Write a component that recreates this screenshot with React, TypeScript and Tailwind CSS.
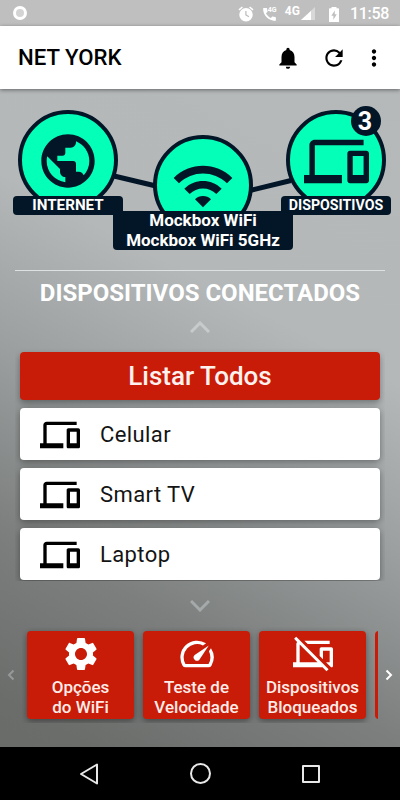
import type { ReactNode } from "react";
import {
  MdCall,
  MdDevices,
  MdMoreVert,
  MdNotifications,
  MdPhonelinkOff,
  MdPublic,
  MdRefresh,
  MdSettings,
  MdSpeed,
  MdWifi,
} from "react-icons/md";

function AlarmIcon({ className }: { className: string }) {
  return (
    <svg className={className} viewBox="0 0 24 24" fill="currentColor" fillRule="evenodd">
      <path d="M22 5.720l-4.600-3.860-1.290 1.530 4.600 3.860L22 5.720zM7.880 3.390L6.600 1.860 2 5.710l1.290 1.530 4.590-3.850zM12 4a9 9 0 1 0 0 18 9 9 0 0 0 0-18zM11 8h1.700v4.800l3.700 2.200-.9 1.400L11 13.700z" />
    </svg>
  );
}

function BatteryIcon({ className }: { className: string }) {
  return (
    <svg className={className} viewBox="0 0 10 15" fill="currentColor" fillRule="evenodd">
      <path d="M2.500 0h5v1.300h1.900c.4 0 .6.2.6.6v12.500c0 .4-.2.600-.6.600H.6c-.4 0-.6-.2-.6-.6V1.900c0-.4.2-.6.6-.6h1.900zM5.800 3.500L2.300 8.700h2.100v4l3.400-5.400H5.800z" />
    </svg>
  );
}

function StatusBar() {
  return (
    <div className="flex h-[26px] shrink-0 items-center bg-[#bfbfbf] pt-[2px] pr-[11px] pl-[13px] text-white">
      <div className="-mt-[2px] size-[14px] rounded-full border-[3px] border-white bg-[#d4d4d4]" />
      <AlarmIcon className="ml-auto size-[18px]" />
      <div className="relative ml-[6px] h-[16px] w-[18px]">
        <MdCall className="size-[17px]" />
        <span className="absolute top-0 left-[7px] text-[7px] leading-[8px] font-bold">4G</span>
      </div>
      <span className="-mt-[6px] ml-[6px] text-[12px] leading-[14px] font-bold">4G</span>
      <svg className="ml-[1px] h-[14px] w-[14px]" viewBox="0 0 14 14" fill="currentColor">
        <path d="M14 0V13H0z" opacity=".4" />
        <path d="M10 4V13H0z" />
      </svg>
      <BatteryIcon className="ml-[14px] h-[15px] w-[10px]" />
      <span className="ml-[11px] text-[16px] leading-5 font-medium tracking-[-0.300px]">11:58</span>
    </div>
  );
}

function Header() {
  return (
    <header className="relative flex h-[63px] shrink-0 items-center bg-white pt-px pr-[13.500px] pl-[18px] text-black shadow-[0_1px_4px_rgba(0,0,0,0.45)]">
      <h1 className="text-[22.200px] font-medium">NET YORK</h1>
      <MdNotifications className="ml-auto size-[26px]" />
      <MdRefresh className="ml-[20px] size-[26px]" />
      <MdMoreVert className="ml-[14px] size-[26px]" />
    </header>
  );
}

function Node({ className, children }: { className: string; children: ReactNode }) {
  return (
    <div
      className={`absolute flex size-[100px] items-center justify-center rounded-full border-4 border-[#021627] bg-[#04ffb9] text-[#021627] ${className}`}
    >
      {children}
    </div>
  );
}

function NetworkMap() {
  return (
    <section className="relative h-[181px] shrink-0">
      <svg className="absolute inset-0 h-full w-full" viewBox="0 89 400 181" stroke="#021627" strokeWidth="5">
        <path d="M114 176L156 186M250 190.500L291 180.500" />
      </svg>
      <Node className="top-[21px] left-[18px] pt-[2px]">
        <MdPublic className="size-[64px]" />
      </Node>
      <Node className="top-[46px] left-[153px] pt-px">
        <MdWifi className="size-[64px]" />
      </Node>
      <Node className="top-[21px] left-[286px] pt-[2px]">
        <MdDevices className="size-[65px] shrink-0" />
      </Node>
      <div className="absolute top-[17px] left-[351px] flex size-[30px] items-center justify-center rounded-full bg-[#021627] pr-[2px] text-[25px] leading-none font-bold text-white">
        3
      </div>
      <div className="absolute top-[107px] left-[13px] h-[19px] w-[110px] rounded bg-[#021627] text-center text-[15.200px] leading-[19px] font-bold text-white">
        INTERNET
      </div>
      <div className="absolute top-[107px] left-[281px] h-[19px] w-[110px] rounded bg-[#021627] text-center text-[14.200px] leading-[19px] font-bold text-white">
        DISPOSITIVOS
      </div>
      <div className="absolute top-[122px] left-[113px] h-[39px] w-[180px] rounded-b bg-[#021627] text-center text-[17px] leading-5 font-bold text-white">
        <p className="-mt-[1px]">Mockbox WiFi</p>
        <p>Mockbox WiFi 5GHz</p>
      </div>
    </section>
  );
}

function Chevron({ d, className }: { d: string; className: string }) {
  return (
    <svg className={className} viewBox="0 0 20 12" fill="none" stroke="currentColor" strokeWidth="3">
      <path d={d} />
    </svg>
  );
}

const devices = ["Celular", "Smart TV", "Laptop"];

function DeviceList() {
  return (
    <section className="flex shrink-0 flex-col items-center">
      <div className="h-px w-[370px] bg-[#dfe1e1]" />
      <h2 className="mt-[7px] text-[24px] leading-[30px] font-bold whitespace-nowrap text-white">
        DISPOSITIVOS CONECTADOS
      </h2>
      <Chevron className="mt-[13px] h-[12px] w-[20px] text-[#c8cbcb]" d="M1 11L10 2L19 11" />
      <div className="mt-[14px] flex w-[370px] flex-col gap-[8px] overflow-hidden px-[5px] pt-[5px] pb-px">
        <button className="h-[48px] rounded bg-[#c81c09] pt-px text-[26px] font-medium text-[#fff1ee] shadow-[0_3px_6px_rgba(0,0,0,0.35)]">
          Listar Todos
        </button>
        {devices.map((name) => (
          <div
            key={name}
            className="flex h-[52px] items-center rounded bg-white pt-px pl-[20px] text-[22px] text-black shadow-[0_2px_7px_rgba(0,0,0,0.38)]"
          >
            <MdDevices className="size-[40px]" />
            <span className="ml-[20px] tracking-[0.400px] text-[#141414]">{name}</span>
          </div>
        ))}
      </div>
      <Chevron className="mt-[19px] h-[12px] w-[20px] text-[#a6a9a9]" d="M1 1L10 10L19 1" />
    </section>
  );
}

const actions = [
  { icon: MdSettings, lines: ["Opções", "do WiFi"] },
  { icon: MdSpeed, lines: ["Teste de", "Velocidade"] },
  { icon: MdPhonelinkOff, lines: ["Dispositivos", "Bloqueados"] },
];

function Actions() {
  return (
    <section className="mt-[19px] flex h-[88px] shrink-0 items-center">
      <svg className="ml-[7px] h-[12px] w-[8px] text-[#979999]" viewBox="0 0 8 12" fill="none" stroke="currentColor" strokeWidth="2">
        <path d="M6.500 1.500L2 6L6.500 10.500" />
      </svg>
      <div className="-my-1 ml-[7px] flex w-[356px] gap-[9px] overflow-hidden py-1 pl-[5px]">
        {actions.map(({ icon: Icon, lines }) => (
          <button
            key={lines[0]}
            className="flex h-[88px] w-[107px] shrink-0 flex-col items-center rounded bg-[#c81c09] pt-[3px] text-[17px] leading-5 font-medium text-[#ffece8] shadow-[0_2px_6px_rgba(0,0,0,0.4)]"
          >
            <Icon className="size-[40px] shrink-0 text-white" />
            <span className="mt-[3px]">{lines[0]}</span>
            <span>{lines[1]}</span>
          </button>
        ))}
        <div className="h-[88px] w-[107px] shrink-0 rounded bg-[#c81c09]" />
      </div>
      <svg className="ml-[7px] h-[12px] w-[8px] text-white" viewBox="0 0 8 12" fill="none" stroke="currentColor" strokeWidth="2">
        <path d="M1.500 1.500L6 6L1.500 10.500" />
      </svg>
    </section>
  );
}

function NavBar() {
  return (
    <nav className="mt-auto flex h-[53px] shrink-0 items-center bg-black text-[#e8e8e8]">
      <svg className="ml-[78px] size-[22px]" viewBox="0 0 22 22" fill="none" stroke="currentColor" strokeWidth="2" strokeLinejoin="round">
        <path d="M19 1.500V20.500L3 11z" />
      </svg>
      <div className="ml-[89.500px] size-[21px] rounded-full border-2 border-[#e8e8e8]" />
      <div className="ml-[91.500px] size-[18px] rounded-[1px] border-2 border-[#e8e8e8]" />
    </nav>
  );
}

export default function App() {
  return (
    <main className="flex h-[800px] w-[400px] flex-col overflow-hidden bg-[linear-gradient(208deg,#b5b9ba_0%,#b4b8b9_38%,#9b9f9f_55%,#7c7f7e_73%,#6b6d6b_90%,#686a68_100%)] font-['Roboto','Liberation_Sans',sans-serif]">
      <StatusBar />
      <Header />
      <NetworkMap />
      <DeviceList />
      <Actions />
      <NavBar />
    </main>
  );
}
